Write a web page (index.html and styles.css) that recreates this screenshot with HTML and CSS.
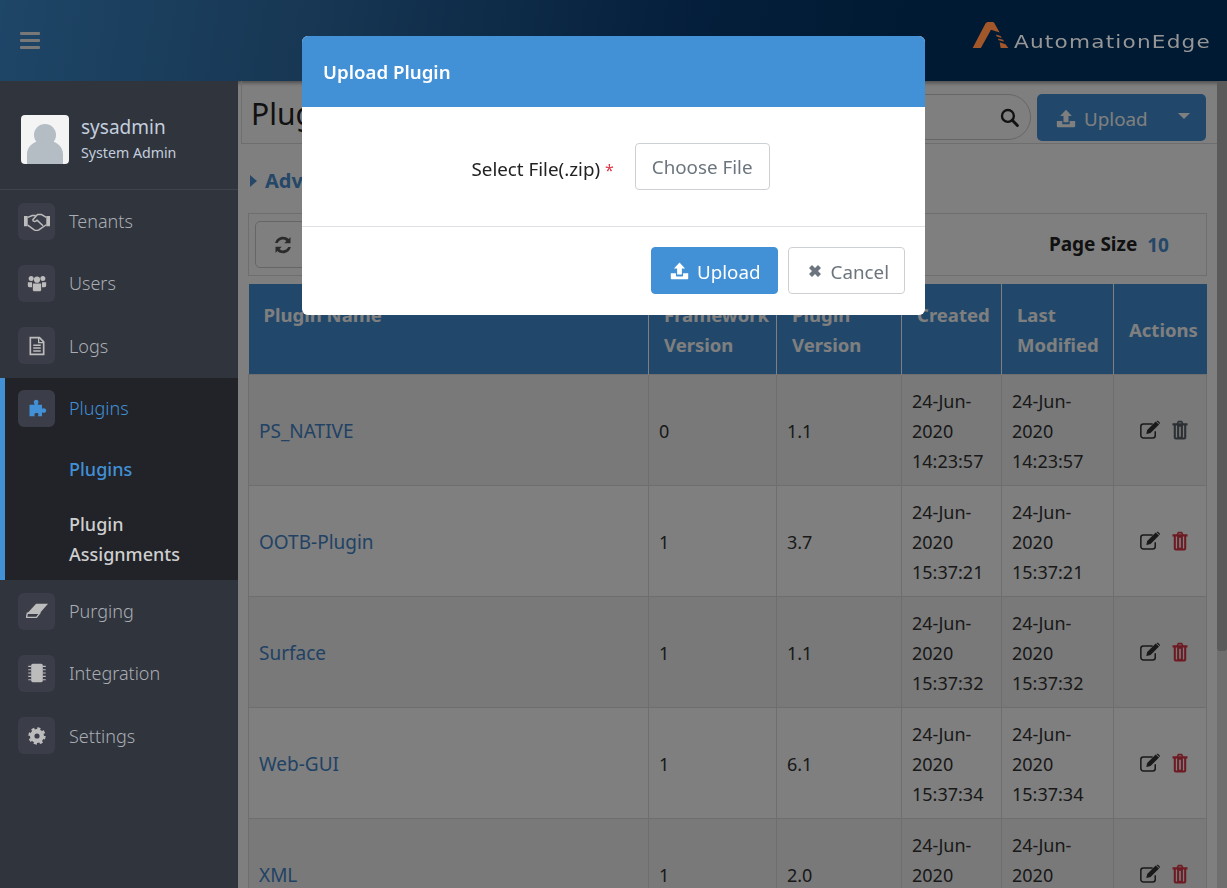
FILE: index.html
```html
<!DOCTYPE html>
<html lang="en">
<head>
  <meta charset="UTF-8">
  <title>Plugins</title>
  <link rel="stylesheet" href="styles.css">
</head>
<body>
  <svg class="sprite" xmlns="http://www.w3.org/2000/svg">
    <symbol id="i-upload" viewBox="0 0 24 24">
      <path d="M12 2 19 9.500H15V17H9V9.500H5Z"/>
      <path d="M1 15.500H7.500V18.500a1 1 0 0 0 1 1H15.500a1 1 0 0 0 1-1V15.500H23V22a1 1 0 0 1-1 1H2a1 1 0 0 1-1-1Z"/>
    </symbol>
    <symbol id="i-times" viewBox="0 0 24 24">
      <path d="M3 7.500 7.500 3 12 7.500 16.500 3 21 7.500 16.500 12 21 16.500 16.500 21 12 16.500 7.500 21 3 16.500 7.500 12Z"/>
    </symbol>
    <symbol id="i-search" viewBox="0 0 24 24">
      <circle cx="10" cy="10" r="7.500" fill="none" stroke="currentColor" stroke-width="3"/>
      <path d="M15.500 15.500 22 22" fill="none" stroke="currentColor" stroke-width="3.600" stroke-linecap="round"/>
    </symbol>
    <symbol id="i-refresh" viewBox="0 0 24 24">
      <path d="M21.500 14.500C20.300 19 16.500 22 12 22 9.400 22 7 21 5.200 19.300L3 21.500V14H10.500L7.800 16.700C8.900 17.800 10.400 18.500 12 18.500 14.900 18.500 17.300 16.900 18.300 14.500Z"/>
      <path d="M21.500 14.500C20.300 19 16.500 22 12 22 9.400 22 7 21 5.200 19.300L3 21.500V14H10.500L7.800 16.700C8.900 17.800 10.400 18.500 12 18.500 14.900 18.500 17.300 16.900 18.300 14.500Z" transform="rotate(180 12 12)"/>
    </symbol>
    <symbol id="i-edit" viewBox="0 0 26 22">
      <path d="M18 12.500V17.500a3 3 0 0 1-3 3H4a3 3 0 0 1-3-3V7a3 3 0 0 1 3-3H15" fill="none" stroke="currentColor" stroke-width="1.800"/>
      <path d="M7.500 15.500 8.500 11 18.500 1 22.500 4.500 12.500 14.500 8 15.800Z"/>
      <path d="M19.700 .3C20.500-.2 21-.1 21.600.4L23.300 2C23.800 2.600 23.800 3.100 23.300 3.600L23 3.900 19.300 .5Z"/>
    </symbol>
    <symbol id="i-trash" viewBox="2 0 20 24">
      <path fill-rule="evenodd" d="M8 4 9.500 1H14.500L16 4H21V6.500H19.500V21A2.500 2.500 0 0 1 17 23.500H7A2.500 2.500 0 0 1 4.500 21V6.500H3V4ZM10 4H14L13.500 3H10.500ZM7 6.500V21H8.500V6.500ZM11 8V20H13V8ZM15.500 8V21H17V6.500H15.500Z"/>
    </symbol>
    <symbol id="i-handshake" viewBox="0 0 28 20">
      <path d="M0 4H4V15H0ZM24 4H28V15H24Z"/>
      <path d="M4 5.500 9 3.500H12.500M24 5.500 19 2.500 14.500 2.500 9.500 8C9.500 10.500 12.500 10.500 14 8.500L20.500 14.500" fill="none" stroke="currentColor" stroke-width="1.600" stroke-linejoin="round"/>
      <path d="M4 14 11 19C12.500 19.800 14.500 19.800 16 19L24 13.500" fill="none" stroke="currentColor" stroke-width="1.600" stroke-linejoin="round"/>
    </symbol>
    <symbol id="i-users" viewBox="0 0 24 24">
      <circle cx="5" cy="6.500" r="3"/><circle cx="19" cy="6.500" r="3"/><circle cx="12" cy="8" r="3.700"/>
      <path d="M1 11H6V17H3C1.500 17 1 16 1 15ZM18 11H23V15C23 16 22.500 17 21 17H18Z"/>
      <path d="M7 13C7 12.500 7.500 12.500 8 12.500H16C16.500 12.500 17 12.500 17 13V20.500C17 21.500 16 22 15 22H9C8 22 7 21.500 7 20.500Z"/>
    </symbol>
    <symbol id="i-file" viewBox="0 0 24 24">
      <path d="M4 2H15L20 7V22H4Z" fill="none" stroke="currentColor" stroke-width="2"/>
      <path d="M14 2V8H20" fill="none" stroke="currentColor" stroke-width="1.600"/>
      <path d="M7.500 11H16.500M7.500 14.500H16.500M7.500 18H16.500" stroke="currentColor" stroke-width="1.800"/>
    </symbol>
    <symbol id="i-puzzle" viewBox="0 0 24 24">
      <path d="M9 7C7.500 5.500 8 2 11 2S14.500 5.500 13 7V8H18V13C19.500 11.500 23 12 23 15S19.500 18.500 18 17V22H13C14 20.500 14.500 18 11.500 18 8.500 18 8.500 20.500 9.500 22H3V8H9Z"/>
    </symbol>
    <symbol id="i-eraser" viewBox="0 0 24 20">
      <path d="M11 2H24L15 12.500H1.500Z"/>
      <path d="M1.500 12.500H15L11.500 17H.500Z" fill="none" stroke="currentColor" stroke-width="1.500"/>
    </symbol>
    <symbol id="i-chip" viewBox="0 0 24 24">
      <rect x="5" y="1" width="14" height="22" rx="2"/>
      <path d="M1.500 4H5M1.500 8H5M1.500 12H5M1.500 16H5M1.500 20H5M19 4H22.500M19 8H22.500M19 12H22.500M19 16H22.500M19 20H22.500" stroke="currentColor" stroke-width="1.300"/>
    </symbol>
    <symbol id="i-cog" viewBox="-1.500 -1.500 27 27">
      <circle cx="12" cy="12" r="6.500" fill="none" stroke="currentColor" stroke-width="6"/>
      <circle cx="12" cy="12" r="10" fill="none" stroke="currentColor" stroke-width="3.400" stroke-dasharray="4.200 3.654"/>
    </symbol>
  </svg>

  <header class="topbar">
    <button class="menu-btn" aria-label="Menu"><span></span><span></span><span></span></button>
    <div class="logo">
      <svg class="logo-mark" viewBox="0 0 38 28">
        <path d="M0 27 13 2C14 .5 15 0 16.500 0H20C21.500 0 22.500 .5 23 2L28 11 19 8 8.500 27Z"/>
        <path d="M24 13 29 14.500 30 16.500 25 15ZM26 17 31.500 18.500 32.500 20.500 27 19ZM28 21 34 23 37 27H29Z"/>
      </svg>
      <span class="logo-text">AutomationEdge</span>
    </div>
  </header>

  <div class="layout">
    <aside class="sidebar">
      <div class="profile">
        <div class="avatar">
          <svg viewBox="0 0 48 49">
            <circle cx="24" cy="20" r="11"/>
            <path d="M6 49V39C6 32 12 27 18 26C21 29 27 29 30 26C36 27 42 32 42 39V49Z"/>
          </svg>
        </div>
        <div class="profile-text">
          <div class="profile-name">sysadmin</div>
          <div class="profile-role">System Admin</div>
        </div>
      </div>
      <nav>
        <a class="nav-item"><span class="nav-icon"><svg class="wide"><use href="#i-handshake"/></svg></span>Tenants</a>
        <a class="nav-item"><span class="nav-icon"><svg><use href="#i-users"/></svg></span>Users</a>
        <a class="nav-item"><span class="nav-icon"><svg><use href="#i-file"/></svg></span>Logs</a>
        <div class="nav-group">
          <a class="nav-item active"><span class="nav-icon"><svg><use href="#i-puzzle"/></svg></span>Plugins</a>
          <a class="sub-item active">Plugins</a>
          <a class="sub-item last">Plugin Assignments</a>
        </div>
        <a class="nav-item"><span class="nav-icon"><svg><use href="#i-eraser"/></svg></span>Purging</a>
        <a class="nav-item"><span class="nav-icon"><svg><use href="#i-chip"/></svg></span>Integration</a>
        <a class="nav-item"><span class="nav-icon"><svg><use href="#i-cog"/></svg></span>Settings</a>
      </nav>
    </aside>

    <main class="content">
      <div class="title-bar">
        <h1>Plugins</h1>
        <div class="title-actions">
          <div class="search"><svg class="icon"><use href="#i-search"/></svg></div>
          <button class="split-btn">
            <svg class="icon"><use href="#i-upload"/></svg>
            <span>Upload</span>
            <i class="caret"></i>
          </button>
        </div>
      </div>

      <div class="advanced"><i class="caret-right"></i>Advanced Search</div>

      <div class="toolbar">
        <button class="refresh-btn"><svg class="icon"><use href="#i-refresh"/></svg></button>
        <div class="page-size"><b>Page Size</b><span>10</span></div>
      </div>

      <table class="plugins">
        <thead>
          <tr>
            <th class="col-name">Plugin Name</th>
            <th class="col-fw">Framework Version</th>
            <th class="col-ver">Plugin Version</th>
            <th class="col-date">Created</th>
            <th class="col-mod">Last Modified</th>
            <th class="col-act">Actions</th>
          </tr>
        </thead>
        <tbody>
          <tr>
            <td><a>PS_NATIVE</a></td><td>0</td><td>1.1</td>
            <td>24-Jun-2020 14:23:57</td><td>24-Jun-2020 14:23:57</td>
            <td class="actions"><svg class="icon edit"><use href="#i-edit"/></svg><svg class="icon trash off"><use href="#i-trash"/></svg></td>
          </tr>
          <tr>
            <td><a>OOTB-Plugin</a></td><td>1</td><td>3.7</td>
            <td>24-Jun-2020 15:37:21</td><td>24-Jun-2020 15:37:21</td>
            <td class="actions"><svg class="icon edit"><use href="#i-edit"/></svg><svg class="icon trash"><use href="#i-trash"/></svg></td>
          </tr>
          <tr>
            <td><a>Surface</a></td><td>1</td><td>1.1</td>
            <td>24-Jun-2020 15:37:32</td><td>24-Jun-2020 15:37:32</td>
            <td class="actions"><svg class="icon edit"><use href="#i-edit"/></svg><svg class="icon trash"><use href="#i-trash"/></svg></td>
          </tr>
          <tr>
            <td><a>Web-GUI</a></td><td>1</td><td>6.1</td>
            <td>24-Jun-2020 15:37:34</td><td>24-Jun-2020 15:37:34</td>
            <td class="actions"><svg class="icon edit"><use href="#i-edit"/></svg><svg class="icon trash"><use href="#i-trash"/></svg></td>
          </tr>
          <tr>
            <td><a>XML</a></td><td>1</td><td>2.0</td>
            <td>24-Jun-2020 15:37:36</td><td>24-Jun-2020 15:37:36</td>
            <td class="actions"><svg class="icon edit"><use href="#i-edit"/></svg><svg class="icon trash"><use href="#i-trash"/></svg></td>
          </tr>
        </tbody>
      </table>
    </main>

    <div class="scrollbar"><div class="thumb"></div></div>
  </div>

  <div class="backdrop"></div>

  <div class="modal">
    <div class="modal-head">Upload Plugin</div>
    <div class="modal-body">
      <label>Select File(.zip) <em>*</em></label>
      <button class="btn">Choose File</button>
    </div>
    <div class="modal-foot">
      <button class="btn primary"><svg class="icon"><use href="#i-upload"/></svg><span>Upload</span></button>
      <button class="btn cancel"><svg class="icon small"><use href="#i-times"/></svg><span>Cancel</span></button>
    </div>
  </div>
</body>
</html>
```

FILE: styles.css
```css
* {
  box-sizing: border-box;
}
html, body {
  height: 100%;
}
body {
  margin: 0;
  overflow: hidden;
  font-family: "Noto Sans", "Open Sans", sans-serif;
  font-size: 18px;
  line-height: 30px;
  color: #333;
  background: #fff;
}
button {
  font: inherit;
  cursor: pointer;
}
.sprite {
  display: none;
}
.icon {
  width: 20px;
  height: 20px;
  fill: currentColor;
  flex: none;
}

/* top bar */
.topbar {
  height: 81px;
  display: flex;
  align-items: center;
  justify-content: space-between;
  padding: 0 18px 0 20px;
  background: linear-gradient(100deg, #3d8ccf 0%, #2f6fa8 25%, #0a3f78 55%, #023466 75%);
  box-shadow: 0 2px 4px rgba(0, 0, 0, 0.4);
}
.menu-btn {
  width: 20px;
  padding: 0;
  border: 0;
  background: none;
  display: flex;
  flex-direction: column;
  gap: 3.5px;
}
.menu-btn span {
  height: 3.5px;
  background: #f0f0f0;
  border-radius: 1px;
}
.logo {
  position: relative;
  z-index: 60;
  display: flex;
  align-items: flex-end;
  gap: 4px;
  margin-top: -11px;
}
.logo-mark {
  width: 38px;
  height: 27px;
  fill: #a2572a;
}
.logo-text {
  width: 195px;
  font-family: "DejaVu Sans", sans-serif;
  font-size: 18px;
  line-height: 20px;
  letter-spacing: 1px;
  color: #969696;
  transform: translateY(3px) scaleX(1.2);
  transform-origin: left;
}

.layout {
  display: flex;
  height: calc(100vh - 81px);
}

/* sidebar sits above the backdrop */
.sidebar {
  position: relative;
  z-index: 60;
  flex: 0 0 238px;
  background: #30343d;
  color: #a9adb3;
}
.profile {
  height: 109px;
  padding: 34px 0 0 21px;
  display: flex;
  gap: 12px;
  border-bottom: 1px solid #3f4350;
}
.avatar {
  width: 48px;
  height: 49px;
  background: #f4f4f4;
  border-radius: 4px;
  overflow: hidden;
}
.avatar svg {
  display: block;
  width: 48px;
  height: 49px;
  fill: #b4bcc4;
}
.profile-text {
  margin-top: -1px;
}
.profile-name {
  font-size: 19px;
  line-height: 26px;
  color: #c3cede;
}
.profile-role {
  font-size: 14.2px;
  line-height: 25px;
  color: #c3cede;
}
.nav-item {
  height: 62.3px;
  padding-left: 18px;
  display: flex;
  align-items: center;
  gap: 14px;
  font-weight: 300;
}
.nav-icon {
  width: 37px;
  height: 37px;
  background: #3b3e48;
  border-radius: 6px;
  display: flex;
  align-items: center;
  justify-content: center;
  color: #bcbcbc;
}
.nav-icon svg {
  width: 22px;
  height: 20px;
  fill: currentColor;
}
.nav-icon svg.wide {
  width: 26px;
  height: 19px;
}
.nav-group {
  margin-top: 1px;
  background: #212328;
  border-left: 5px solid #4290d6;
}
.nav-group .nav-item {
  padding-left: 13px;
  height: 61px;
}
.nav-item.active,
.sub-item.active {
  color: #4290d6;
}
.nav-item.active .nav-icon {
  color: #4290d6;
}
.sub-item {
  display: block;
  padding: 15px 40px 15px 64px;
  font-weight: 500;
  color: #cfcfcf;
}
.sub-item.last {
  padding-top: 10px;
  padding-bottom: 11px;
}

/* main column */
.content {
  flex: 1;
  min-width: 0;
  padding: 0 10px;
}
.title-bar {
  height: 63px;
  margin: 0 -10px 0 -7px;
  padding: 13px 11px 0 9px;
  display: flex;
  justify-content: space-between;
  border-bottom: 1px solid #ddd;
  border-left: 1px solid #ddd;
}
.title-bar h1 {
  margin: 0;
  font-size: 30px;
  line-height: 40px;
  font-weight: 400;
  color: #222;
}
.title-actions {
  display: flex;
  gap: 6px;
}
.search {
  width: 280px;
  height: 46px;
  border: 1px solid #ccc;
  border-radius: 23px;
  display: flex;
  align-items: center;
  justify-content: flex-end;
  padding-right: 11px;
  background: #fff;
  color: #222;
}
.search .icon {
  width: 19px;
  height: 19px;
}
.split-btn {
  width: 169px;
  height: 47px;
  padding: 0 16px 0 19px;
  border: 0;
  border-radius: 5px;
  display: flex;
  align-items: center;
  gap: 8px;
  background: #4290d6;
  color: #fff;
  font-size: 18.8px;
}
.split-btn span {
  padding-top: 3px;
}
.caret {
  margin-left: auto;
  margin-bottom: 3px;
  border-left: 6px solid transparent;
  border-right: 6px solid transparent;
  border-top: 6px solid #fff;
}
.advanced {
  height: 69px;
  display: flex;
  align-items: center;
  padding: 5px 0 0 2px;
  gap: 8px;
  font-size: 20px;
  font-weight: 700;
  color: #4a8ed0;
}
.caret-right {
  border-top: 6px solid transparent;
  border-bottom: 6px solid transparent;
  border-left: 7px solid #4a8ed0;
}
.toolbar {
  height: 63px;
  padding: 7px 37px 0 6px;
  margin-bottom: 8px;
  display: flex;
  justify-content: space-between;
  border: 1px solid #ddd;
}
.refresh-btn {
  width: 90px;
  height: 47px;
  padding: 0 0 0 17px;
  border: 1px solid #ccc;
  border-radius: 5px;
  display: flex;
  align-items: center;
  background: #fff;
  color: #555;
}
.page-size {
  display: flex;
  gap: 10px;
  padding-top: 8px;
  color: #222;
}
.page-size b {
  font-weight: 700;
  font-size: 19px;
}
.page-size span {
  padding-top: 1px;
  font-weight: 700;
  font-size: 19px;
  color: #4a8ed0;
}

/* table */
.plugins {
  width: 959px;
  border-collapse: collapse;
  table-layout: fixed;
}
.plugins th {
  height: 90px;
  padding: 16px 5px 14px 15px;
  background: #4290d6;
  color: #fff;
  font-size: 18.5px;
  font-weight: 700;
  text-align: left;
  vertical-align: top;
  border-left: 1px solid #fff;
}
.plugins th:first-child {
  border-left: 0;
}
.plugins .col-act {
  vertical-align: middle;
  padding: 2px 0 0 15px;
}
.col-name { width: 400px; }
.col-fw { width: 128px; }
.col-ver { width: 125px; }
.col-date { width: 100px; }
.col-mod { width: 112px; }
.plugins td {
  height: 111px;
  padding: 11px 10px 9px;
  border: 1px solid #ddd;
}
.plugins tbody tr:nth-child(odd) td {
  background: #f2f2f2;
}
.plugins a {
  font-size: 19px;
  color: #4285c9;
}
.plugins .actions {
  padding: 0 0 2px 9px;
  text-align: center;
}
.actions .icon {
  vertical-align: top;
  margin-top: 6px;
}
.actions .edit {
  width: 22px;
  height: 20px;
  color: #333;
}
.actions .trash {
  width: 18px;
  height: 20px;
  margin-left: 9px;
  color: #dc3545;
}
.actions .trash.off {
  color: #596168;
}

.scrollbar {
  flex: 0 0 10px;
  background: #dcdcdc;
}
.thumb {
  height: 570px;
  background: #b4b4b4;
  border-radius: 0 0 3px 3px;
}

/* modal */
.backdrop {
  position: fixed;
  inset: 0;
  z-index: 50;
  background: rgba(0, 0, 0, 0.5);
}
.modal {
  position: fixed;
  z-index: 70;
  left: 302px;
  top: 36px;
  width: 623px;
  height: 279px;
  background: #fff;
  border-radius: 6px;
  overflow: hidden;
  color: #222;
  font-size: 18.8px;
}
.modal-head {
  height: 71px;
  padding: 21px;
  background: #4290d6;
  color: #fff;
  font-size: 18.7px;
  font-weight: 600;
  line-height: 30px;
}
.modal-body {
  height: 120px;
  padding: 36px 0 0 14px;
  display: flex;
  justify-content: center;
  gap: 21px;
  border-bottom: 1px solid #dee2e6;
}
.modal-body label {
  padding-top: 11px;
}
.modal-body em {
  font-size: 16px;
  color: #dc3545;
  font-style: normal;
}
.btn {
  height: 47px;
  padding: 0 16px;
  border: 1px solid #ccd0d5;
  border-radius: 4px;
  display: inline-flex;
  align-items: center;
  gap: 8px;
  background: #fff;
  color: #6c757d;
}
.btn span {
  padding-top: 2px;
}
.btn.primary {
  padding: 0 16px 0 18px;
  border-color: #4290d6;
  background: #4290d6;
  color: #fff;
}
.btn.primary .icon {
  width: 19px;
  height: 19px;
}
.btn.cancel {
  padding: 0 15px 0 18px;
}
.icon.small {
  width: 16px;
  height: 16px;
}
.modal-foot {
  padding: 20px 20px 0 0;
  display: flex;
  justify-content: flex-end;
  gap: 10px;
}
```
